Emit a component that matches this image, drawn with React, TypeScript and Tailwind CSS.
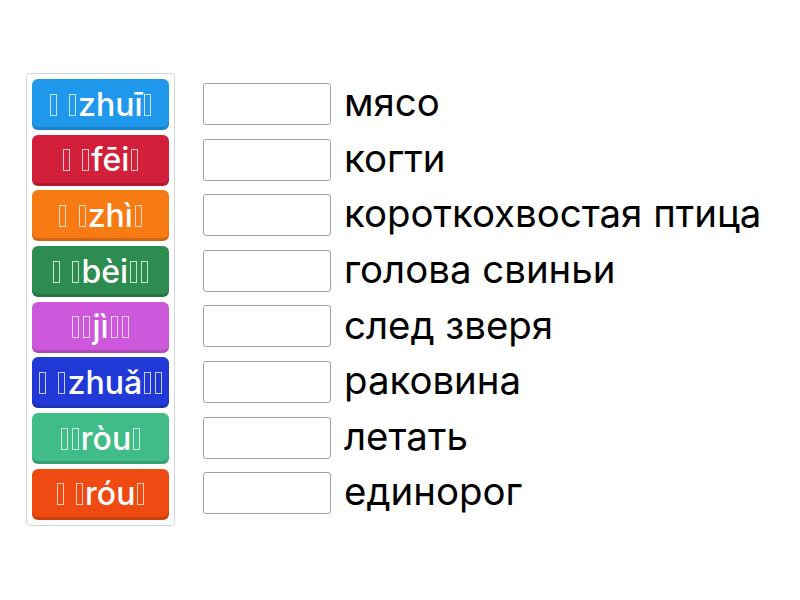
const items = [
  { label: "# #zhuī#", bg: "bg-[#2098ec]" },
  { label: "# #fēi#", bg: "bg-[#d3203a]" },
  { label: "# #zhì#", bg: "bg-[#f77a12]" },
  { label: "# #bèi##", bg: "bg-[#2d8c4f]" },
  { label: "##jì##", bg: "bg-[#cd58dc]" },
  { label: "# #zhuǎ##", bg: "bg-[#2139d6]" },
  { label: "##ròu#", bg: "bg-[#3fbc88]" },
  { label: "# #róu#", bg: "bg-[#ef4a12]" },
];

const words = [
  "мясо",
  "когти",
  "короткохвостая птица",
  "голова свиньи",
  "след зверя",
  "раковина",
  "летать",
  "единорог",
];

// missing-glyph boxes drawn as plain outlined spans
function Label({ text }: { text: string }) {
  const parts = text.split("#");
  return (
    <span className="whitespace-pre">
      {parts.map((p, i) => (
        <span key={i}>
          {p}
          {i < parts.length - 1 ? (
            <span className="mx-[2px] inline-block h-[22px] w-[7px] border border-white/75" />
          ) : null}
        </span>
      ))}
    </span>
  );
}

export default function App() {
  return (
    <div className="flex min-h-[600px] w-[800px] items-start bg-white pl-[26px] pt-[73px] font-['Inter',sans-serif]">
      <div className="flex flex-col gap-[4.7px] rounded border border-gray-300 p-[5px]">
        {items.map((item, i) => (
          <div
            key={i}
            className={`flex h-[51px] w-[137px] items-center justify-center rounded-md ${item.bg} text-[32px] leading-none font-medium text-white shadow-[inset_0_-3px_0_rgba(0,0,0,0.15)]`}
          >
            <Label text={item.label} />
          </div>
        ))}
      </div>
      <div className="ml-[28px] flex flex-col gap-[13.6px] pt-[10px]">
        {words.map((w) => (
          <div key={w} className="flex h-[42px] items-center gap-[13px]">
            <div className="h-[42px] w-[128px] rounded-[3px] border border-gray-400 bg-white" />
            <span className="pb-[3px] text-[38.4px] leading-none text-black">{w}</span>
          </div>
        ))}
      </div>
    </div>
  );
}
